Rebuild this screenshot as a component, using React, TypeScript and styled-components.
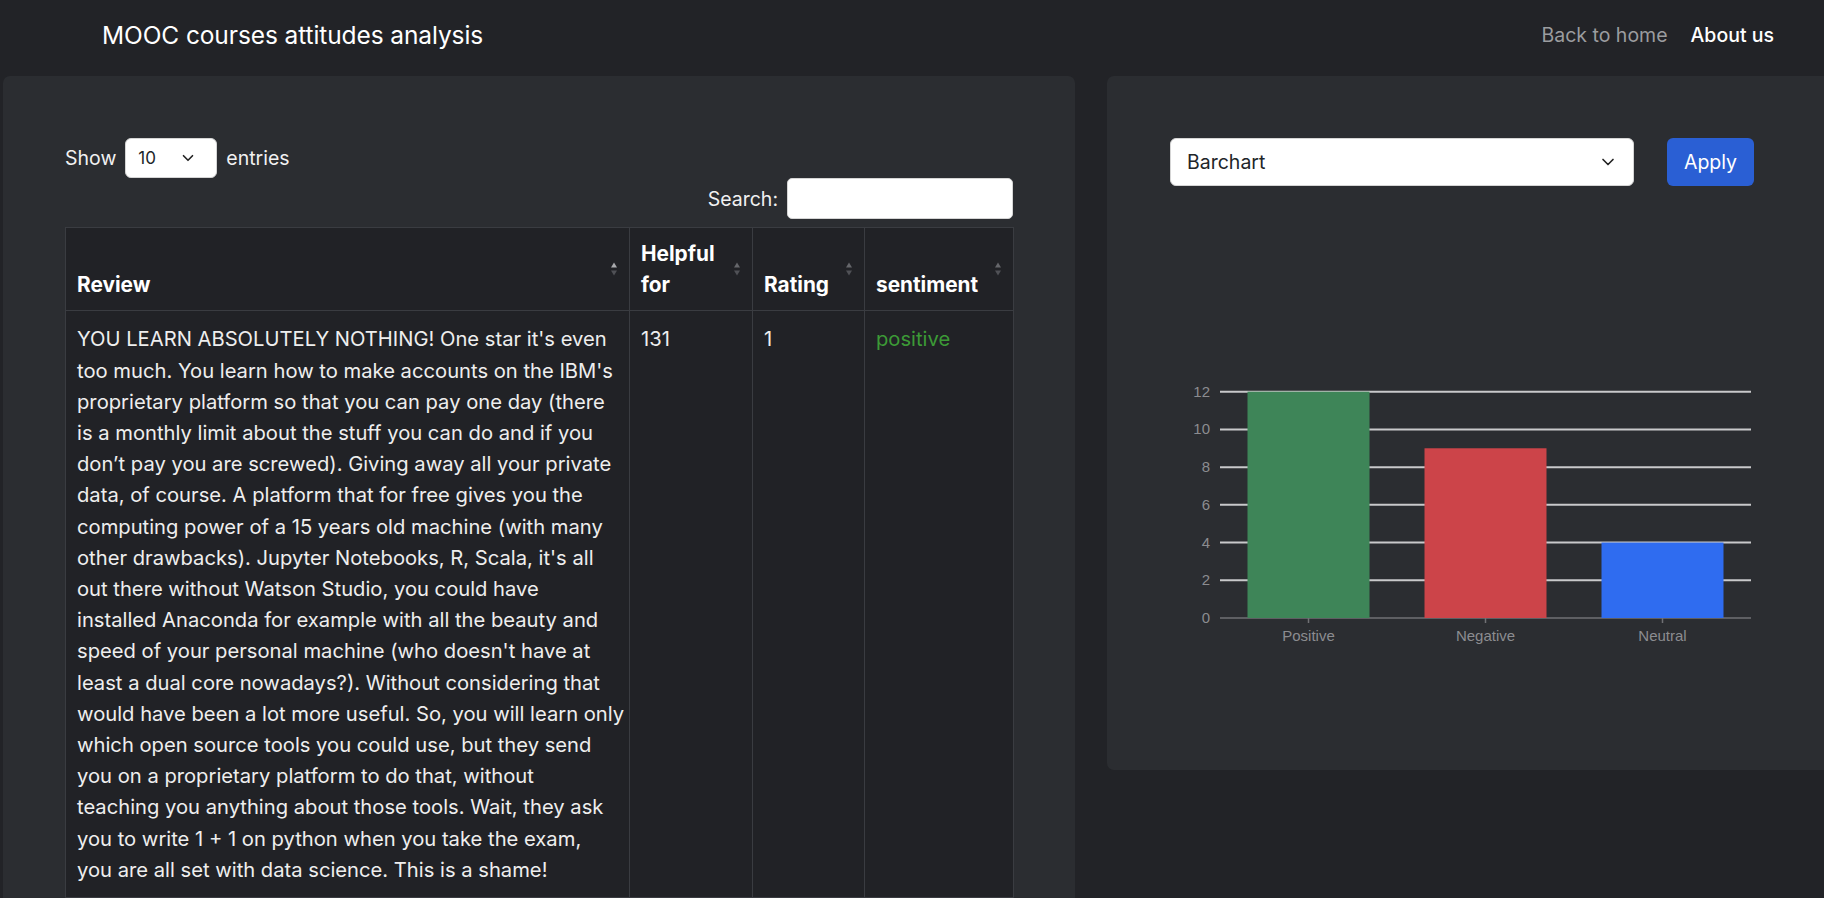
import React from "react";
import styled, { createGlobalStyle } from "styled-components";
import { ChevronDown } from "lucide-react";

const GlobalStyle = createGlobalStyle`
  html, body {
    margin: 0;
    background: #222327;
    overflow: hidden;
  }
  body {
    font-family: Inter, "Noto Sans", sans-serif;
    color: #f1f1f1;
  }
  * { box-sizing: border-box; }
`;

// the review is kept with the line breaks it has in the table
const reviewLines = [
  "YOU LEARN ABSOLUTELY NOTHING! One star it's even",
  "too much. You learn how to make accounts on the IBM's",
  "proprietary platform so that you can pay one day (there",
  "is a monthly limit about the stuff you can do and if you",
  "don’t pay you are screwed). Giving away all your private",
  "data, of course. A platform that for free gives you the",
  "computing power of a 15 years old machine (with many",
  "other drawbacks). Jupyter Notebooks, R, Scala, it's all",
  "out there without Watson Studio, you could have",
  "installed Anaconda for example with all the beauty and",
  "speed of your personal machine (who doesn't have at",
  "least a dual core nowadays?). Without considering that",
  "would have been a lot more useful. So, you will learn only",
  "which open source tools you could use, but they send",
  "you on a proprietary platform to do that, without",
  "teaching you anything about those tools. Wait, they ask",
  "you to write 1 + 1 on python when you take the exam,",
  "you are all set with data science. This is a shame!",
];

const chartData = [
  { label: "Positive", value: 12, color: "#3e8558" },
  { label: "Negative", value: 9, color: "#cc4449" },
  { label: "Neutral", value: 4, color: "#2f6cf0" },
];

const Navbar = styled.nav`
  height: 76px;
  display: flex;
  align-items: center;
  justify-content: space-between;
  padding: 0 50px 6px 102px;
`;

const Brand = styled.a`
  font-size: 24.5px;
  color: #ffffff;
  letter-spacing: -0.1px;
`;

const NavLinks = styled.div`
  display: flex;
  gap: 23px;
`;

const NavLink = styled.a<{ $active?: boolean }>`
  font-size: 19.5px;
  color: ${(p) => (p.$active ? "#ffffff" : "#9b9c9f")};
  font-weight: ${(p) => (p.$active ? 500 : 400)};
`;

const Main = styled.main`
  display: flex;
  align-items: flex-start;
  gap: 32px;
  padding-left: 3px;
`;

const Panel = styled.section`
  background: #2b2d31;
  border-radius: 7px;
`;

const TablePanel = styled(Panel)`
  width: 1072px;
  flex: none;
  padding: 62px 62px 40px;
`;

const ChartPanel = styled(Panel)`
  flex: 1;
  margin-right: -20px;
  padding: 62px 63px 110px;
`;

const Controls = styled.div`
  display: flex;
  flex-direction: column;
  font-size: 19.5px;
`;

const LengthRow = styled.label`
  display: flex;
  align-items: center;
  gap: 9px;
  height: 40px;
`;

const SearchRow = styled.label`
  display: flex;
  align-items: center;
  justify-content: flex-end;
  gap: 9px;
  margin-bottom: 8px;
`;

const SelectWrap = styled.div<{ $w: number; $h: number }>`
  position: relative;
  width: ${(p) => p.$w}px;
  height: ${(p) => p.$h}px;

  svg {
    position: absolute;
    right: ${(p) => (p.$w > 200 ? 16 : 20)}px;
    top: 50%;
    transform: translateY(-50%);
    color: #222;
    pointer-events: none;
  }
`;

const Select = styled.select<{ $size: number; $pad: number }>`
  appearance: none;
  width: 100%;
  height: 100%;
  border: 1px solid #d5d5d5;
  border-radius: 6px;
  background: #ffffff;
  color: #212529;
  font-family: Inter, "Noto Sans", sans-serif;
  font-size: ${(p) => p.$size}px;
  padding-left: ${(p) => p.$pad}px;
  outline: none;
`;

const SearchInput = styled.input`
  width: 226px;
  height: 41px;
  border: 1px solid #d5d5d5;
  border-radius: 5px;
  background: #ffffff;
`;

const Table = styled.table`
  width: 948px;
  border-collapse: collapse;
  table-layout: fixed;
  background: #212226;
  font-size: 20.2px;
  line-height: 31.2px;
`;

const Th = styled.th<{ $w: number }>`
  position: relative;
  width: ${(p) => p.$w}px;
  border: 1px solid #3a3c41;
  padding: 10px 28px 10px 11px;
  text-align: left;
  vertical-align: bottom;
  font-size: 20.8px;
  font-weight: 700;
  color: #ffffff;
`;

const SortIcon = styled.span<{ $on?: boolean }>`
  position: absolute;
  right: 12px;
  top: 50%;
  transform: translateY(-50%);
  display: flex;
  flex-direction: column;
  gap: 3px;

  &::before,
  &::after {
    content: "";
    border-left: 3.5px solid transparent;
    border-right: 3.5px solid transparent;
  }
  &::before {
    border-bottom: 5px solid ${(p) => (p.$on ? "#a9aaad" : "#66676b")};
  }
  &::after {
    border-top: 5px solid #505156;
  }
`;

const Td = styled.td`
  border: 1px solid #3a3c41;
  padding: 12px 11px;
  vertical-align: top;
  color: #eeeeee;
`;

const ReviewLine = styled.span`
  display: block;
  white-space: nowrap;
`;

const Sentiment = styled(Td)`
  color: #3c9a36;
`;

const FormRow = styled.form`
  display: flex;
  gap: 33px;
`;

const ApplyButton = styled.button`
  width: 87px;
  height: 48px;
  border: none;
  border-radius: 6px;
  background: #2a5fd4;
  color: #ffffff;
  font-family: Inter, "Noto Sans", sans-serif;
  font-size: 19.5px;
`;

const ChartSvg = styled.svg`
  display: block;
  margin-top: 184px;
  font-family: "Liberation Sans", Arial, sans-serif;
`;

function BarChart() {
  const left = 50;
  const right = 581;
  const base = 248;
  const unit = (248 - 21.7) / 12;
  const slot = (right - left) / chartData.length;
  const barW = 122;
  const ticks = [0, 2, 4, 6, 8, 10, 12];

  return (
    <ChartSvg width={600} height={290}>
      {ticks.map((t) => (
        <g key={t}>
          <line
            x1={left}
            x2={right}
            y1={base - t * unit}
            y2={base - t * unit}
            stroke={t === 0 ? "#707175" : "#c9c9cb"}
            strokeWidth={t === 0 ? 1.5 : 2}
          />
          <text x={40} y={base - t * unit + 5} textAnchor="end" fontSize={15} fill="#8b8c90">
            {t}
          </text>
        </g>
      ))}
      {chartData.map((d, i) => {
        const cx = left + slot * i + slot / 2;
        return (
          <g key={d.label}>
            <rect x={cx - barW / 2} y={base - d.value * unit} width={barW} height={d.value * unit} fill={d.color} />
            <line x1={cx} x2={cx} y1={base} y2={base + 5} stroke="#707175" strokeWidth={1.5} />
            <text x={cx} y={base + 23} textAnchor="middle" fontSize={15} fill="#8b8c90">
              {d.label}
            </text>
          </g>
        );
      })}
    </ChartSvg>
  );
}

export default function App() {
  return (
    <>
      <GlobalStyle />
      <Navbar>
        <Brand>MOOC courses attitudes analysis</Brand>
        <NavLinks>
          <NavLink>Back to home</NavLink>
          <NavLink $active>About us</NavLink>
        </NavLinks>
      </Navbar>
      <Main>
        <TablePanel>
          <Controls>
            <LengthRow>
              Show
              <SelectWrap $w={92} $h={40}>
                <Select $size={17} $pad={12} defaultValue="10">
                  <option>10</option>
                  <option>25</option>
                  <option>50</option>
                </Select>
                <ChevronDown size={18} strokeWidth={2.2} />
              </SelectWrap>
              entries
            </LengthRow>
            <SearchRow>
              Search:
              <SearchInput type="search" />
            </SearchRow>
          </Controls>
          <Table>
            <thead>
              <tr>
                <Th $w={564}>
                  Review
                  <SortIcon $on />
                </Th>
                <Th $w={123}>
                  Helpful for
                  <SortIcon />
                </Th>
                <Th $w={112}>
                  Rating
                  <SortIcon />
                </Th>
                <Th $w={149}>
                  sentiment
                  <SortIcon />
                </Th>
              </tr>
            </thead>
            <tbody>
              <tr>
                <Td>
                  {reviewLines.map((line) => (
                    <ReviewLine key={line}>{line}</ReviewLine>
                  ))}
                </Td>
                <Td>131</Td>
                <Td>1</Td>
                <Sentiment>positive</Sentiment>
              </tr>
            </tbody>
          </Table>
        </TablePanel>
        <ChartPanel>
          <FormRow onSubmit={(e) => e.preventDefault()}>
            <SelectWrap $w={464} $h={48}>
              <Select $size={19.5} $pad={16} defaultValue="Barchart">
                <option>Barchart</option>
                <option>Piechart</option>
              </Select>
              <ChevronDown size={20} strokeWidth={2} />
            </SelectWrap>
            <ApplyButton type="submit">Apply</ApplyButton>
          </FormRow>
          <BarChart />
        </ChartPanel>
      </Main>
    </>
  );
}
